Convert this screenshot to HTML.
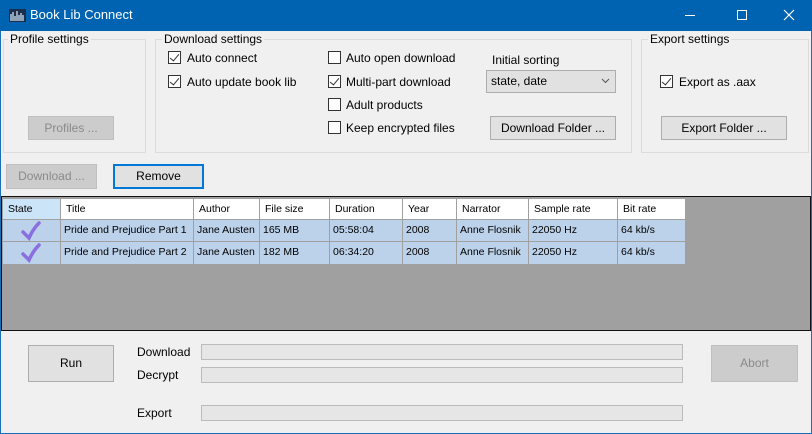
<!DOCTYPE html><html><head><style>
*{margin:0;padding:0;box-sizing:border-box}
body{width:812px;height:434px;overflow:hidden;background:#f0f0f0;font-family:"Liberation Sans",sans-serif;font-size:12px;color:#000;position:relative}
.a{position:absolute}
.t{position:absolute;white-space:nowrap;line-height:14px}
.g{position:absolute;border:1px solid #dcdcdc}
.gl{position:absolute;background:#f0f0f0;padding:0 2px;top:-8px;left:5px;line-height:14px;white-space:nowrap}
.cb{position:absolute;width:13px;height:13px;border:1px solid #333;background:#fff}
.cb.k::after{content:"";position:absolute;left:3px;top:0px;width:4px;height:8px;border:solid #333;border-width:0 1.5px 1.5px 0;transform:rotate(40deg)}
.b{position:absolute;background:#e1e1e1;border:1px solid #adadad;text-align:center;white-space:nowrap}
.dis{background:#cccccc;border-color:#bfbfbf;color:#8a8a8a}
.pb{position:absolute;left:201px;width:482px;height:16px;background:#e6e6e6;border:1px solid #bcbcbc}
.c{position:absolute;height:100%;border-right:1px solid #a0a0a0;padding-left:3px;line-height:21px;font-size:10.5px;white-space:nowrap;overflow:hidden}
.h .c{line-height:21px}
.row{position:absolute;left:3px;width:683px}
</style></head><body>
<div class="a" style="left:0;top:0;width:812px;height:434px;border:1px solid #1a6fb8"></div>
<div class="a" style="left:0;top:0;width:812px;height:31px;background:#0063b1"></div>
<svg class="a" style="left:9px;top:9px" width="17" height="13"><rect width="17" height="13" fill="#1b2f4a"/><path d="M2 12V5M4 12V3M6 12V7M8 12V2M10 12V6M12 12V4M14 12V6" stroke="#cfe0f2" stroke-width="1.3"/></svg>
<div class="t" style="left:30px;top:8px;color:#fff;font-size:13px">Book Lib Connect</div>
<div class="a" style="left:685px;top:15px;width:10px;height:1px;background:#fff"></div>
<div class="a" style="left:737px;top:10px;width:10px;height:10px;border:1px solid #fff"></div>
<svg class="a" style="left:783px;top:9px" width="12" height="12"><path d="M1 1L11 11M11 1L1 11" stroke="#fff" stroke-width="1.2"/></svg>

<div class="g" style="left:3px;top:39px;width:143px;height:114px"><span class="gl" style="left:4px">Profile settings</span></div>
<div class="g" style="left:155px;top:39px;width:477px;height:114px"><span class="gl" style="left:6px">Download settings</span></div>
<div class="g" style="left:641px;top:39px;width:168px;height:114px"><span class="gl" style="left:6px">Export settings</span></div>

<div class="cb k" style="left:168px;top:51px"></div><div class="t" style="left:187px;top:51px">Auto connect</div>
<div class="cb k" style="left:168px;top:75px"></div><div class="t" style="left:187px;top:75px">Auto update book lib</div>
<div class="cb" style="left:328px;top:51px"></div><div class="t" style="left:346px;top:51px">Auto open download</div>
<div class="cb k" style="left:328px;top:75px"></div><div class="t" style="left:346px;top:75px">Multi-part download</div>
<div class="cb" style="left:328px;top:98px"></div><div class="t" style="left:346px;top:98px">Adult products</div>
<div class="cb" style="left:328px;top:121px"></div><div class="t" style="left:346px;top:121px">Keep encrypted files</div>
<div class="t" style="left:492px;top:53px">Initial sorting</div>
<div class="b" style="left:486px;top:70px;width:130px;height:23px;text-align:left;padding-left:4px;line-height:21px">state, date</div>
<svg class="a" style="left:601px;top:78px" width="9" height="6"><path d="M1 1L4.5 4.5L8 1" stroke="#555" fill="none"/></svg>
<div class="b" style="left:490px;top:116px;width:126px;height:24px;line-height:22px">Download Folder ...</div>
<div class="cb k" style="left:660px;top:75px"></div><div class="t" style="left:679px;top:75px">Export as .aax</div>
<div class="b" style="left:661px;top:116px;width:126px;height:24px;line-height:22px">Export Folder ...</div>
<div class="b dis" style="left:28px;top:116px;width:86px;height:24px;line-height:22px">Profiles ...</div>

<div class="b dis" style="left:6px;top:164px;width:91px;height:25px;line-height:23px">Download ...</div>
<div class="b" style="left:113px;top:164px;width:91px;height:25px;line-height:21px;border:2px solid #0078d7">Remove</div>

<div class="a" style="left:1px;top:196px;width:810px;height:135px;background:#a0a0a0;border:1px solid #111"></div>
<div class="row h" style="top:199px;height:20px;background:#fff">
<div class="c" style="left:0;width:58px;background:#cce4f7;padding-left:5px">State</div>
<div class="c" style="left:58px;width:133px;padding-left:5px">Title</div>
<div class="c" style="left:191px;width:66px;padding-left:5px">Author</div>
<div class="c" style="left:257px;width:70px;padding-left:5px">File size</div>
<div class="c" style="left:327px;width:73px;padding-left:5px">Duration</div>
<div class="c" style="left:400px;width:54px;padding-left:5px">Year</div>
<div class="c" style="left:454px;width:72px;padding-left:5px">Narrator</div>
<div class="c" style="left:526px;width:89px;padding-left:5px">Sample rate</div>
<div class="c" style="left:615px;width:68px;padding-left:5px">Bit rate</div>
</div>
<div class="row" style="top:219px;height:23px;background:#bcd1ea;border-top:1px solid #a0a0a0;border-bottom:1px solid #a0a0a0">
<div class="c" style="left:0;width:58px"><svg width="22" height="20" style="margin:1px 0 0 14px"><path d="M3 11L9 17Q13 8 19 2" stroke="#8a6fe0" stroke-width="3.5" fill="none" stroke-linecap="round"/></svg></div>
<div class="c" style="left:58px;width:133px">Pride and Prejudice Part 1</div>
<div class="c" style="left:191px;width:66px">Jane Austen</div>
<div class="c" style="left:257px;width:70px">165 MB</div>
<div class="c" style="left:327px;width:73px">05:58:04</div>
<div class="c" style="left:400px;width:54px">2008</div>
<div class="c" style="left:454px;width:72px">Anne Flosnik</div>
<div class="c" style="left:526px;width:89px">22050 Hz</div>
<div class="c" style="left:615px;width:68px">64 kb/s</div>
</div>
<div class="row" style="top:242px;height:23px;background:#bcd1ea;border-bottom:1px solid #a0a0a0">
<div class="c" style="left:0;width:58px"><svg width="22" height="20" style="margin:1px 0 0 14px"><path d="M3 11L9 17Q13 8 19 2" stroke="#8a6fe0" stroke-width="3.5" fill="none" stroke-linecap="round"/></svg></div>
<div class="c" style="left:58px;width:133px">Pride and Prejudice Part 2</div>
<div class="c" style="left:191px;width:66px">Jane Austen</div>
<div class="c" style="left:257px;width:70px">182 MB</div>
<div class="c" style="left:327px;width:73px">06:34:20</div>
<div class="c" style="left:400px;width:54px">2008</div>
<div class="c" style="left:454px;width:72px">Anne Flosnik</div>
<div class="c" style="left:526px;width:89px">22050 Hz</div>
<div class="c" style="left:615px;width:68px">64 kb/s</div>
</div>

<div class="b" style="left:28px;top:345px;width:86px;height:37px;line-height:35px">Run</div>
<div class="b dis" style="left:711px;top:345px;width:87px;height:37px;line-height:35px">Abort</div>
<div class="t" style="left:137px;top:345px">Download</div>
<div class="t" style="left:137px;top:368px">Decrypt</div>
<div class="t" style="left:137px;top:406px">Export</div>
<div class="pb" style="top:344px"></div>
<div class="pb" style="top:367px"></div>
<div class="pb" style="top:405px"></div>
</body></html>
